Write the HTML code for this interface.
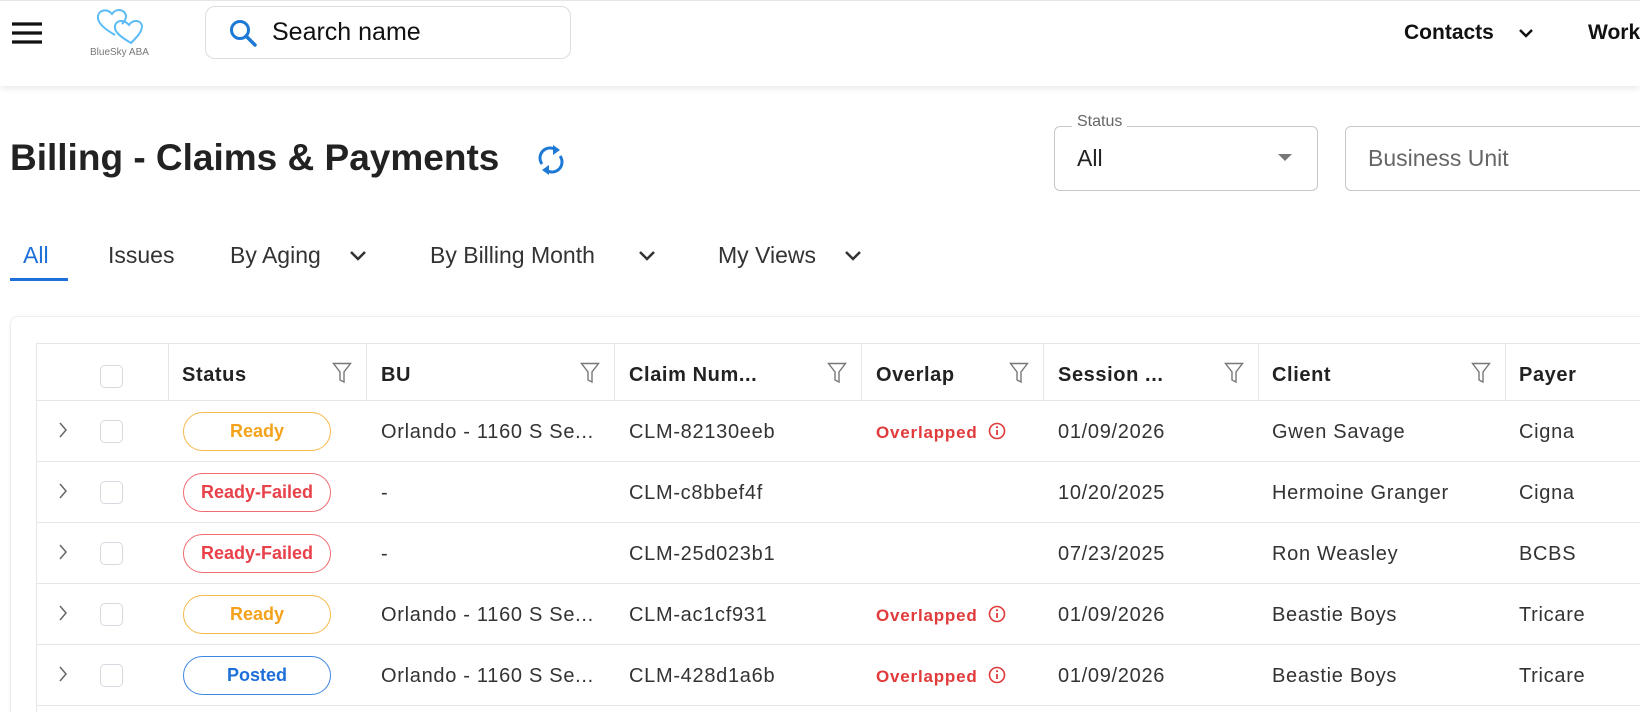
<!DOCTYPE html>
<html style="width:1640px;height:712px;overflow:hidden"><head><meta charset="utf-8"><style>
*{margin:0;padding:0;box-sizing:border-box}
body{width:1640px;height:712px;overflow:hidden;background:#fff;font-family:"Liberation Sans",sans-serif;color:#222}
#w{position:relative;width:1640px;height:712px;overflow:hidden}
.a{position:absolute;white-space:nowrap}
.hdr{position:absolute;left:0;top:0;width:1640px;height:86px;background:#fff;border-top:1px solid #e6e6e6;box-shadow:0 3px 6px rgba(0,0,0,0.08)}
.tab{font-size:23px;color:#333;top:242px}
.th{font-weight:bold;font-size:20px;letter-spacing:0.6px;color:#222;top:364px}
.td{font-size:20px;letter-spacing:0.7px;color:#333}
.pill{position:absolute;left:183px;width:148px;height:39px;border-radius:20px;border:1.5px solid;font-weight:bold;font-size:18px;text-align:center;line-height:36px}
.vl{position:absolute;top:343px;width:1px;height:57px;background:#e3e6ea}
.hl{position:absolute;left:36px;width:1604px;height:1px;background:#e3e6ea}
.cb{position:absolute;left:100px;width:23px;height:23px;border:1.5px solid #d6dae0;border-radius:5px;background:#fff}
.ov{font-size:17px;letter-spacing:0.8px;color:#e03a3a;font-weight:bold}
</style></head><body><div id="w">
<div class="hdr"></div>
<svg class="a" style="left:12px;top:22px" width="30" height="22"><g stroke="#111" stroke-width="3.2"><line x1="0" y1="2" x2="30" y2="2"/><line x1="0" y1="11" x2="30" y2="11"/><line x1="0" y1="20" x2="30" y2="20"/></g></svg>
<svg class="a" style="left:95px;top:7px" width="50" height="38" viewBox="0 0 50 38"><g fill="none" stroke="#5bbcf5" stroke-width="2"><path d="M20 28 C6 20 2 14 3 9 C4 3 12 1 17 7 C21 1 30 2 31 9 C31 12 29 15 27 17"/><path d="M36 36 C24 29 19 24 20 19 C21 13 29 12 34 18 C38 12 46 13 47 19 C47 25 42 30 36 36Z"/></g></svg>
<div class="a" style="left:90px;top:47px;font-size:10px;color:#777">BlueSky ABA</div>
<div class="a" style="left:205px;top:6px;width:366px;height:53px;border:1px solid #ddd;border-radius:10px"></div>
<svg class="a" style="left:229px;top:19px" width="30" height="30" viewBox="0 0 30 30"><circle cx="11" cy="11" r="8.5" fill="none" stroke="#1e78d6" stroke-width="3"/><line x1="17" y1="17" x2="26" y2="26" stroke="#1e78d6" stroke-width="3.5" stroke-linecap="round"/></svg>
<div class="a" style="left:272px;top:18px;font-size:25px;color:#111">Search name</div>
<div class="a" style="left:1404px;top:21px;font-size:21px;font-weight:bold;color:#111">Contacts</div>
<svg class="a" style="left:1518px;top:27px" width="16" height="12"><path d="M2 3 L8 9 L14 3" fill="none" stroke="#111" stroke-width="2.5"/></svg>
<div class="a" style="left:1588px;top:21px;font-size:21px;font-weight:bold;color:#111">Work</div>

<div class="a" style="left:10px;top:137px;font-size:37px;font-weight:bold;color:#222">Billing - Claims &amp; Payments</div>
<svg class="a" style="left:536px;top:144px" width="30" height="32" viewBox="0 0 30 32"><g fill="none" stroke="#1e78d6" stroke-width="3"><path d="M6 20 A10 10 0 0 1 20 6"/><path d="M24 12 A10 10 0 0 1 10 26"/></g><path d="M17 1 L24 6 L17 11Z" fill="#1e78d6"/><path d="M13 21 L6 26 L13 31Z" fill="#1e78d6"/></svg>

<div class="a" style="left:1054px;top:126px;width:264px;height:65px;border:1px solid #c8c8c8;border-radius:6px"></div>
<div class="a" style="left:1072px;top:113px;background:#fff;padding:0 5px;font-size:16px;color:#666">Status</div>
<div class="a" style="left:1077px;top:145px;font-size:23px;color:#222">All</div>
<svg class="a" style="left:1277px;top:153px" width="16" height="10"><path d="M1 1 L15 1 L8 8Z" fill="#777"/></svg>
<div class="a" style="left:1345px;top:126px;width:310px;height:65px;border:1px solid #c8c8c8;border-radius:6px"></div>
<div class="a" style="left:1368px;top:145px;font-size:23px;color:#666">Business Unit</div>

<div class="a tab" style="left:23px;color:#1e6fd9">All</div>
<div class="a" style="left:10px;top:278px;width:58px;height:3px;background:#1e6fd9"></div>
<div class="a tab" style="left:108px">Issues</div>
<div class="a tab" style="left:230px">By Aging</div>
<svg class="a" style="left:349px;top:250px" width="18" height="12"><path d="M2 2 L9 9 L16 2" fill="none" stroke="#333" stroke-width="2.5"/></svg>
<div class="a tab" style="left:430px">By Billing Month</div>
<svg class="a" style="left:638px;top:250px" width="18" height="12"><path d="M2 2 L9 9 L16 2" fill="none" stroke="#333" stroke-width="2.5"/></svg>
<div class="a tab" style="left:718px">My Views</div>
<svg class="a" style="left:844px;top:250px" width="18" height="12"><path d="M2 2 L9 9 L16 2" fill="none" stroke="#333" stroke-width="2.5"/></svg>

<div class="a" style="left:10px;top:316px;width:1640px;height:500px;border:1px solid #eee;border-radius:8px;box-shadow:0 0 4px rgba(0,0,0,0.05)"></div>
<div class="a" style="left:36px;top:343px;width:1610px;height:480px;border:1px solid #e3e6ea"></div>
<div class="hl" style="top:400px"></div>
<div class="hl" style="top:461px"></div>
<div class="hl" style="top:522px"></div>
<div class="hl" style="top:583px"></div>
<div class="hl" style="top:644px"></div>
<div class="hl" style="top:705px"></div>
<div class="vl" style="left:168px"></div><div class="vl" style="left:366px"></div><div class="vl" style="left:614px"></div><div class="vl" style="left:861px"></div><div class="vl" style="left:1043px"></div><div class="vl" style="left:1258px"></div><div class="vl" style="left:1505px"></div>
<div class="cb" style="top:365px"></div>
<div class="a th" style="left:182px">Status</div>
<div class="a th" style="left:381px">BU</div>
<div class="a th" style="left:629px">Claim Num...</div>
<div class="a th" style="left:876px">Overlap</div>
<div class="a th" style="left:1058px">Session ...</div>
<div class="a th" style="left:1272px">Client</div>
<div class="a th" style="left:1519px">Payer</div>
<svg width="0" height="0" style="position:absolute"><defs><symbol id="f" viewBox="0 0 20 22"><path d="M1.5 1.5 H18.5 L12 10 V20 L8 18 V10 Z" fill="none" stroke="#777" stroke-width="1.4"/></symbol><symbol id="c" viewBox="0 0 10 18"><path d="M2 2 L8 9 L2 16" fill="none" stroke="#666" stroke-width="1.5"/></symbol><symbol id="i" viewBox="0 0 18 18"><circle cx="9" cy="9" r="7.5" fill="none" stroke="#e03a3a" stroke-width="1.6"/><line x1="9" y1="8" x2="9" y2="13" stroke="#e03a3a" stroke-width="1.8"/><circle cx="9" cy="5.2" r="1.1" fill="#e03a3a"/></symbol></defs></svg>
<svg class="a" style="left:332px;top:362px" width="20" height="22"><use href="#f"/></svg>
<svg class="a" style="left:580px;top:362px" width="20" height="22"><use href="#f"/></svg>
<svg class="a" style="left:827px;top:362px" width="20" height="22"><use href="#f"/></svg>
<svg class="a" style="left:1009px;top:362px" width="20" height="22"><use href="#f"/></svg>
<svg class="a" style="left:1224px;top:362px" width="20" height="22"><use href="#f"/></svg>
<svg class="a" style="left:1471px;top:362px" width="20" height="22"><use href="#f"/></svg>

<svg class="a" style="left:58px;top:421px" width="10" height="18"><use href="#c"/></svg>
<div class="cb" style="top:420px"></div>
<div class="pill" style="top:412px;color:#f5a21b;border-color:#f5b84a">Ready</div>
<div class="a td" style="left:381px;top:421px">Orlando - 1160 S Se...</div>
<div class="a td" style="left:629px;top:421px">CLM-82130eeb</div>
<div class="a ov" style="left:876px;top:423px">Overlapped</div>
<svg class="a" style="left:988px;top:422px" width="18" height="18"><use href="#i"/></svg>
<div class="a td" style="left:1058px;top:421px">01/09/2026</div>
<div class="a td" style="left:1272px;top:421px">Gwen Savage</div>
<div class="a td" style="left:1519px;top:421px">Cigna</div>

<svg class="a" style="left:58px;top:482px" width="10" height="18"><use href="#c"/></svg>
<div class="cb" style="top:481px"></div>
<div class="pill" style="top:473px;color:#e8414a;border-color:#ef6b70">Ready-Failed</div>
<div class="a td" style="left:381px;top:482px">-</div>
<div class="a td" style="left:629px;top:482px">CLM-c8bbef4f</div>
<div class="a td" style="left:1058px;top:482px">10/20/2025</div>
<div class="a td" style="left:1272px;top:482px">Hermoine Granger</div>
<div class="a td" style="left:1519px;top:482px">Cigna</div>

<svg class="a" style="left:58px;top:543px" width="10" height="18"><use href="#c"/></svg>
<div class="cb" style="top:542px"></div>
<div class="pill" style="top:534px;color:#e8414a;border-color:#ef6b70">Ready-Failed</div>
<div class="a td" style="left:381px;top:543px">-</div>
<div class="a td" style="left:629px;top:543px">CLM-25d023b1</div>
<div class="a td" style="left:1058px;top:543px">07/23/2025</div>
<div class="a td" style="left:1272px;top:543px">Ron Weasley</div>
<div class="a td" style="left:1519px;top:543px">BCBS</div>

<svg class="a" style="left:58px;top:604px" width="10" height="18"><use href="#c"/></svg>
<div class="cb" style="top:603px"></div>
<div class="pill" style="top:595px;color:#f5a21b;border-color:#f5b84a">Ready</div>
<div class="a td" style="left:381px;top:604px">Orlando - 1160 S Se...</div>
<div class="a td" style="left:629px;top:604px">CLM-ac1cf931</div>
<div class="a ov" style="left:876px;top:606px">Overlapped</div>
<svg class="a" style="left:988px;top:605px" width="18" height="18"><use href="#i"/></svg>
<div class="a td" style="left:1058px;top:604px">01/09/2026</div>
<div class="a td" style="left:1272px;top:604px">Beastie Boys</div>
<div class="a td" style="left:1519px;top:604px">Tricare</div>

<svg class="a" style="left:58px;top:665px" width="10" height="18"><use href="#c"/></svg>
<div class="cb" style="top:664px"></div>
<div class="pill" style="top:656px;color:#1e6fd9;border-color:#3f86e0">Posted</div>
<div class="a td" style="left:381px;top:665px">Orlando - 1160 S Se...</div>
<div class="a td" style="left:629px;top:665px">CLM-428d1a6b</div>
<div class="a ov" style="left:876px;top:667px">Overlapped</div>
<svg class="a" style="left:988px;top:666px" width="18" height="18"><use href="#i"/></svg>
<div class="a td" style="left:1058px;top:665px">01/09/2026</div>
<div class="a td" style="left:1272px;top:665px">Beastie Boys</div>
<div class="a td" style="left:1519px;top:665px">Tricare</div>
</div></body></html>
